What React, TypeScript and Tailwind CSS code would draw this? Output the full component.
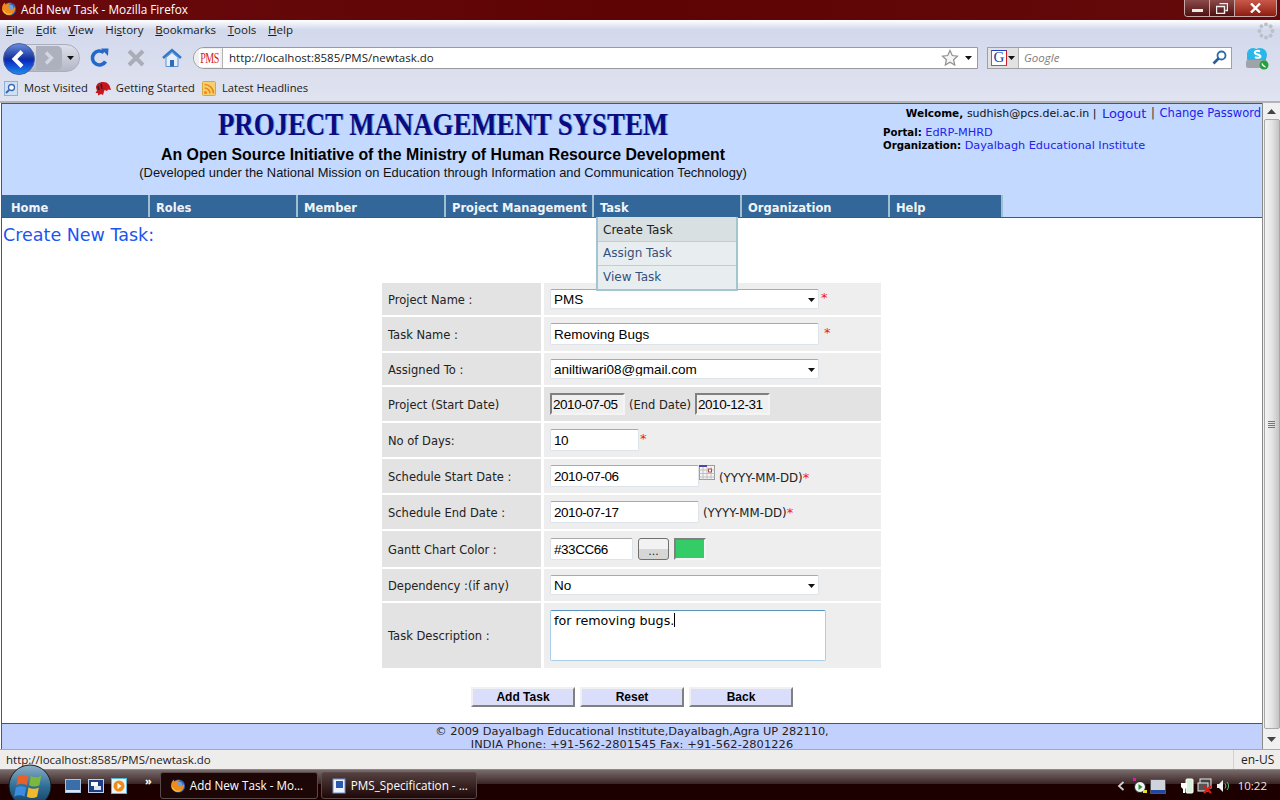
const CHROME = "font-['Open_Sans',sans-serif]";
const VERDANA = "font-['DejaVu_Sans',sans-serif]";
const ARIAL = "font-['Liberation_Sans',sans-serif]";

function Caret() {
  return (
    <svg width="7" height="4" viewBox="0 0 7 4" className="shrink-0">
      <path d="M0 0h7L3.5 4z" fill="#111" />
    </svg>
  );
}

function FirefoxIcon({ size = 16 }: { size?: number }) {
  return (
    <svg width={size} height={size} viewBox="0 0 16 16" className="shrink-0">
      <circle cx="8.5" cy="8" r="6.6" fill="#2f5fb0" />
      <circle cx="9" cy="7" r="3.6" fill="#6fa0dc" />
      <path d="M1 8c0-3 1.400-5.500 3-6.500-.2 1 .1 1.700.8 2.200C6 2.600 8 2 10 2.500 8.500 3 7.600 4 7.500 5c-.2 2 1.500 3.500 3.500 3.200 1.500-.2 2.600-1.400 2.700-3 1 2.800.2 6-2.200 7.600-2.600 1.800-6.200 1.500-8.500-.8C1.600 10.700 1 9.500 1 8z" fill="#ef8a1c" />
      <path d="M2 10c1 2.500 3.500 4 6 3.800 1.500-.1 3-.9 3.800-2-2 1.200-4.800 1.200-6.600.1C3.900 11.100 3.200 10 3 8.800z" fill="#f9c637" />
    </svg>
  );
}

function TitleBar() {
  return (
    <div className="flex h-[20px] items-start bg-gradient-to-r from-[#6a0a0e] via-[#5e0404] to-[#640a0c] pl-[1px]">
      <div className="mt-[1px]">
        <FirefoxIcon />
      </div>
      <span className={`${CHROME} ml-[4px] text-[11.8px] leading-[19px] text-white`}>Add New Task - Mozilla Firefox</span>
      <div className="ml-auto mr-[3px] flex h-[17px] w-[93px] overflow-hidden rounded-b-[4px] border border-t-0 border-[#c9a8a8]">
        <div className="flex w-[25px] items-center justify-center border-r border-[#c9a8a8] bg-gradient-to-b from-[#8a4a4a] to-[#4e1010]">
          <div className="mt-[4px] h-[3px] w-[11px] bg-[#e8e8e8]" />
        </div>
        <div className="flex w-[25px] items-center justify-center border-r border-[#c9a8a8] bg-gradient-to-b from-[#8a4a4a] to-[#4e1010]">
          <svg width="12" height="11" viewBox="0 0 12 11">
            <path d="M3.500.5h8v7h-2M.5 3.500h8v7h-8z" fill="none" stroke="#eee" strokeWidth="1.400" />
          </svg>
        </div>
        <div className="flex flex-1 items-center justify-center bg-gradient-to-b from-[#c8584a] to-[#8e1c10]">
          <svg width="11" height="10" viewBox="0 0 11 10">
            <path d="M1 .5l9 9M10 .5l-9 9" stroke="#fff" strokeWidth="2.400" />
          </svg>
        </div>
      </div>
    </div>
  );
}

const MENU_ITEMS: [string, string, string][] = [
  ["", "F", "ile"],
  ["", "E", "dit"],
  ["", "V", "iew"],
  ["Hi", "s", "tory"],
  ["", "B", "ookmarks"],
  ["", "T", "ools"],
  ["", "H", "elp"],
];

function MenuBar() {
  return (
    <div className={`${CHROME} flex h-[21px] items-center gap-[11.8px] pb-[2px] pl-[6px] text-[11.5px] text-[#1a1a1a]`}>
      {MENU_ITEMS.map(([a, b, c]) => (
        <span key={a + b + c}>
          {a}
          <span className="underline">{b}</span>
          {c}
        </span>
      ))}
      <svg width="18" height="18" viewBox="0 0 18 18" className="ml-auto mr-[5px] mt-[2px]">
        {[0, 45, 90, 135, 180, 225, 270, 315].map((r) => (
          <circle key={r} cx="9" cy="2.500" r="2" fill="#bcc0c8" transform={`rotate(${r} 9 9)`} />
        ))}
      </svg>
    </div>
  );
}

function BackForward() {
  return (
    <div className="relative ml-[3px] flex h-[28px] w-[77px] items-center justify-end rounded-full border border-[#a9aebd] bg-gradient-to-b from-[#dde0ea] to-[#b4b8c6] pr-[5px]">
      <div className="absolute -left-[1px] -top-[2px]">
        <svg width="32" height="32" viewBox="0 0 32 32">
          <defs>
            <linearGradient id="backBlue" x1="0" y1="0" x2="0" y2="1">
              <stop offset="0" stopColor="#6b8fe0" />
              <stop offset="0.5" stopColor="#12309c" />
              <stop offset="0.55" stopColor="#0a2cc0" />
              <stop offset="1" stopColor="#1f8df0" />
            </linearGradient>
          </defs>
          <circle cx="16" cy="16" r="15.500" fill="url(#backBlue)" stroke="#4a5f9c" />
          <path d="M19 8.500L11.500 16l7.500 7.500" fill="none" stroke="#fff" strokeWidth="4" />
        </svg>
      </div>
      <div className="mr-[5px] flex h-[24px] w-[26px] items-center justify-center rounded-r-[5px] bg-[#adb1bd]">
        <svg width="12" height="14" viewBox="0 0 12 14">
          <path d="M3 1.500L8.500 7 3 12.500" fill="none" stroke="#d4d7e0" strokeWidth="3.200" />
        </svg>
      </div>
      <Caret />
    </div>
  );
}

function NavBar() {
  return (
    <div className="flex h-[33px] items-center">
      <BackForward />
      <svg width="20" height="20" viewBox="0 0 20 20" className="ml-[10px]">
        <path d="M15.500 13.500A7 7 0 1 1 13.800 4.500" fill="none" stroke="#2468c8" strokeWidth="3.600" />
        <path d="M11 .5l7.500 0-.5 7.500z" fill="#2468c8" />
      </svg>
      <svg width="18" height="18" viewBox="0 0 18 18" className="ml-[17px]">
        <path d="M2 2l14 14M16 2L2 16" stroke="#a9adb8" strokeWidth="4" />
      </svg>
      <svg width="20" height="20" viewBox="0 0 20 20" className="ml-[17px]">
        <path d="M1 10l9-8 9 8" fill="none" stroke="#2f78c8" strokeWidth="2.400" />
        <path d="M4 9.500L10 4.500l6 5v9H4z" fill="#e8eef8" stroke="#5c90d0" />
        <rect x="8" y="12" width="4" height="6.500" fill="#2f6db8" />
      </svg>
      <div className="ml-[11px] flex h-[22px] w-[785px] items-center rounded-l-[11px] border border-[#9a9a9a] bg-white">
        <div className="flex h-full w-[29px] items-center justify-center rounded-l-[11px] border-r border-[#b5b5b5] bg-[#f0f0f0] pl-[3px]">
          <span className="bg-white px-[1px] font-['Liberation_Serif',serif] text-[10px] leading-[12px] tracking-[-0.5px] text-[#d5202a] [transform:scaleY(1.500)]">PMS</span>
        </div>
        <span className={`${CHROME} ml-[6px] text-[11.5px] text-[#1a1a1a]`}>http://localhost:8585/PMS/newtask.do</span>
        <svg width="18" height="18" viewBox="0 0 18 18" className="ml-auto mr-[-2px]">
          <path d="M9 1.500l2.300 5 5.200.6-3.900 3.600 1.100 5.300L9 13.300 4.300 16l1.100-5.300L1.500 7.100l5.200-.6z" fill="#f4f4f4" stroke="#8f8f8f" strokeWidth="1.200" />
        </svg>
        <div className="ml-[8px] mr-[5px]">
          <Caret />
        </div>
      </div>
      <div className="ml-[9px] flex h-[22px] w-[245px] items-center border border-[#a0a0a0] bg-white">
        <div className="flex h-full w-[31px] items-center gap-[1px] border-r border-[#b0b0b0] bg-[#e2e2e2] pl-[3px]">
          <div className="flex h-[16px] w-[16px] items-center justify-center border border-[#22a040] border-r-[#d02020] border-t-[#2040c0] bg-white font-['Liberation_Serif',serif] text-[15px] leading-none text-[#2040a8]">
            G
          </div>
          <Caret />
        </div>
        <span className={`${CHROME} ml-[5px] text-[11.5px] italic text-[#7d7d7d]`}>Google</span>
        <svg width="15" height="15" viewBox="0 0 15 15" className="ml-auto mr-[4px]">
          <circle cx="9.500" cy="5.500" r="4" fill="#fff" stroke="#2c6aa8" strokeWidth="1.800" />
          <path d="M6.500 8.500L1.500 13.500" stroke="#2c5a98" strokeWidth="2.600" />
        </svg>
      </div>
      <svg width="24" height="24" viewBox="0 0 24 24" className="ml-[13px]">
        <circle cx="8" cy="8" r="6" fill="#29b6e8" />
        <circle cx="15" cy="9" r="7" fill="#29b6e8" />
        <rect x="2" y="7" width="19" height="7" fill="#29b6e8" />
        <path d="M15 5.500c-3-1.500-6 0-5 1.800.8 1.400 5.500 1 5.500 3 0 1.800-3.500 2-5.500.8" fill="none" stroke="#fff" strokeWidth="2" />
        <rect x="1" y="14" width="21" height="8" rx="2" fill="#9ea4a8" />
        <circle cx="19" cy="19" r="4.500" fill="#22a13c" />
        <path d="M17 17.500c.5 2 1.500 3 3.500 3.500" fill="none" stroke="#fff" strokeWidth="1.400" />
      </svg>
    </div>
  );
}

function BookmarksBar() {
  return (
    <div className={`${CHROME} flex h-[27px] items-center pl-[4px] pt-[1px] text-[11.2px] text-[#1a1a1a]`}>
      <svg width="14" height="15" viewBox="0 0 14 15">
        <rect x=".5" y=".5" width="13" height="14" fill="#cfe0f5" stroke="#8fb0d8" />
        <circle cx="7.500" cy="6.500" r="3" fill="#fff" stroke="#3a68b0" strokeWidth="1.300" />
        <path d="M5 9l-3 3" stroke="#3a68b0" strokeWidth="1.800" />
      </svg>
      <span className="ml-[6px]">Most Visited</span>
      <svg width="16" height="15" viewBox="0 0 16 15" className="ml-[7px]">
        <path d="M1 7c0-4 3-6 7-6 3 0 5 1 6.500 3.500L16 9l-3-.5-1 1.500-2.500-1L8 14l-2-1-3 1.500L3 12 .5 12 2 9.500z" fill="#c8141c" />
        <path d="M3 5l1 4M6 3l1 5" stroke="#222" strokeWidth="1.400" />
      </svg>
      <span className="ml-[5px]">Getting Started</span>
      <svg width="14" height="15" viewBox="0 0 14 15" className="ml-[7px]">
        <rect x=".5" y=".5" width="13" height="14" rx="1" fill="#f6cf6e" stroke="#d8a840" />
        <circle cx="3.500" cy="11.500" r="1.500" fill="#e88a18" />
        <path d="M2.500 7a5.500 5.500 0 0 1 5.500 5.500M2.500 3.500a9 9 0 0 1 9 9" fill="none" stroke="#e88a18" strokeWidth="1.600" />
      </svg>
      <span className="ml-[6px]">Latest Headlines</span>
    </div>
  );
}

function Toolbox() {
  return (
    <div className="h-[83px] border-b-2 border-[#b4b4b8] bg-gradient-to-b from-white via-[#d3d9ec] via-[12%] to-[#e0e3f0]">
      <MenuBar />
      <NavBar />
      <BookmarksBar />
    </div>
  );
}

function PageHeader() {
  return (
    <div className="flex h-[91px] bg-[#c3d9ff]">
      <div className="flex w-[882px] flex-col items-center">
        <div className="mt-[2px] h-[38px] font-['Liberation_Serif',serif] text-[26.8px] font-bold leading-[38px] text-[#0b0b80] [text-shadow:1px_0_0_#6f9fe0] [transform:scaleY(1.150)]">
          PROJECT MANAGEMENT SYSTEM
        </div>
        <div className={`${ARIAL} mt-[1px] text-[15.86px] font-bold leading-[20px] text-black`}>
          An Open Source Initiative of the Ministry of Human Resource Development
        </div>
        <div className={`${ARIAL} text-[12.9px] leading-[16px] text-[#111]`}>
          (Developed under the National Mission on Education through Information and Communication Technology)
        </div>
      </div>
      <div className={`${VERDANA} flex flex-1 flex-col pr-[1px] text-[#2222ee]`}>
        <div className="flex h-[19px] items-center justify-end whitespace-nowrap text-[11.5px] leading-none">
          <span className="text-[10.5px] font-bold text-black">Welcome,&nbsp;</span>
          <span className="text-[11px] text-[#111]">sudhish@pcs.dei.ac.in&nbsp;|&nbsp;</span>
          <span className="ml-[2px] text-[13px]">Logout</span>
          <span className="mx-[1px] text-[#333]">&nbsp;|&nbsp;</span>
          <span>Change Password</span>
        </div>
        <div className="-ml-[1px] mt-[3px] text-[11.25px] leading-[13px]">
          <span className="text-[10.2px] font-bold text-black">Portal: </span>EdRP-MHRD
        </div>
        <div className="-ml-[1px] text-[11.25px] leading-[13px]">
          <span className="text-[10.2px] font-bold text-black">Organization: </span>Dayalbagh Educational Institute
        </div>
      </div>
    </div>
  );
}

const NAV_ITEMS = ["Home", "Roles", "Member", "Project Management", "Task", "Organization", "Help"];

function NavMenu() {
  return (
    <div className={`${VERDANA} flex h-[22px] bg-[#c3d9ff]`}>
      {NAV_ITEMS.map((item) => (
        <div
          key={item}
          className={`relative flex h-[22px] items-end border-r-2 border-[#9fc1cf] bg-[#336699] pb-[3px] text-[11.5px] font-bold leading-none text-[#f0f4f8] ${
            item === "Home" ? "pl-[9px]" : "pl-[6px]"
          } ${item === "Help" ? "w-[113px] border-r-0" : "w-[148px]"}`}
        >
          {item}
          {item === "Task" && <TaskMenu />}
        </div>
      ))}
    </div>
  );
}

function TaskMenu() {
  return (
    <div className="absolute left-[2px] top-[22px] z-10 w-[142px] border-2 border-t-0 border-[#a3c5cf] bg-[#e8eef0] text-[12px] font-normal text-[#35507c]">
      <div className="flex h-[24px] items-center bg-[#d8e0e2] pl-[5px] pt-[1px] text-[#222]">Create Task</div>
      <div className="flex h-[24px] items-center border-t border-[#b8d2da] pb-[1px] pl-[5px]">Assign Task</div>
      <div className="flex h-[24px] items-center border-t border-[#b8d2da] pb-[1px] pl-[5px]">View Task</div>
    </div>
  );
}

function Star() {
  return <span className={`${VERDANA} text-[13px] leading-none text-[#f01818]`}>*</span>;
}

function FormRow({
  label,
  height,
  shaded,
  children,
}: {
  label: string;
  height: string;
  shaded?: boolean;
  children: React.ReactNode;
}) {
  return (
    <div className={`flex ${height} gap-[3px]`}>
      <div className="flex w-[159px] items-center bg-[#e3e3e3] pl-[6px] pt-[3px] text-[11.5px] text-[#222]">{label}</div>
      <div className={`flex flex-1 items-center pl-[6px] ${shaded ? "bg-[#e3e3e3]" : "bg-[#eeeeee]"}`}>{children}</div>
    </div>
  );
}

function TextField({ value, width, compact }: { value: string; width: string; compact?: boolean }) {
  return (
    <input
      readOnly
      value={value}
      className={`${ARIAL} ${width} h-[22px] rounded-[2px] border border-[#dde3ea] border-t-[#a9a9a9] bg-white pl-[3px] text-[13.5px] text-black outline-none ${
        compact ? "tracking-[-0.45px]" : ""
      }`}
    />
  );
}

function ReadOnlyField({ value }: { value: string }) {
  return (
    <input
      readOnly
      value={value}
      className={`${ARIAL} h-[22px] w-[75px] border-2 border-[#f4f4f4] border-l-[#808080] border-t-[#808080] bg-[#f0f0f0] pl-[1px] text-[13.5px] tracking-[-0.45px] text-black outline-none`}
    />
  );
}

function SelectField({ value }: { value: string }) {
  return (
    <div className="relative h-[20px] w-[269px]">
      <select
        defaultValue={value}
        className={`${ARIAL} block h-full w-full appearance-none rounded-[2px] border border-[#dde3ea] border-t-[#a9a9a9] bg-white pl-[3px] pt-[1px] text-[13.5px] leading-none text-black outline-none`}
      >
        <option>{value}</option>
      </select>
      <div className="pointer-events-none absolute right-[4px] top-[9px]">
        <Caret />
      </div>
    </div>
  );
}

function DateHint() {
  return (
    <span className="text-[11.8px] text-[#222]">
      (YYYY-MM-DD)
      <Star />
    </span>
  );
}

function CalendarIcon() {
  return (
    <svg width="16" height="15" viewBox="0 0 16 15" className="-mt-[7px] mr-[4px]">
      <rect x=".5" y=".5" width="15" height="14" fill="#f4f4f4" stroke="#9a9a9a" />
      <rect x="0" y="0" width="8" height="2" fill="#4a4aa8" />
      <path d="M0 5h16M0 8.500h16M0 12h16M4 2v13M8 2v13M12 2v13" stroke="#b5b5b5" strokeWidth=".8" />
      <rect x="9.500" y="4" width="3" height="3" fill="#fff" stroke="#b04848" />
    </svg>
  );
}

function NewTaskForm() {
  return (
    <div className="ml-[380px] mt-[38px] flex w-[499px] flex-col gap-[2px]">
      <FormRow label="Project Name :" height="h-[32px]">
        <SelectField value="PMS" />
        <span className="-mt-[4px] ml-[2px]">
          <Star />
        </span>
      </FormRow>
      <FormRow label="Task Name :" height="h-[34px]">
        <TextField value="Removing Bugs" width="w-[269px]" />
        <span className="-mt-[4px] ml-[5px]">
          <Star />
        </span>
      </FormRow>
      <FormRow label="Assigned To :" height="h-[32px]">
        <SelectField value="aniltiwari08@gmail.com" />
      </FormRow>
      <FormRow label="Project (Start Date)" height="h-[34px]" shaded>
        <ReadOnlyField value="2010-07-05" />
        <span className="mx-[4px] mt-[4px] text-[11.5px] text-[#222]">(End Date)</span>
        <ReadOnlyField value="2010-12-31" />
      </FormRow>
      <FormRow label="No of Days:" height="h-[34px]">
        <TextField value="10" width="w-[89px]" compact />
        <span className="-mt-[4px] ml-[1px]">
          <Star />
        </span>
      </FormRow>
      <FormRow label="Schedule Start Date :" height="h-[34px]">
        <TextField value="2010-07-06" width="w-[149px]" compact />
        <CalendarIcon />
        <span className="mt-[2px]">
          <DateHint />
        </span>
      </FormRow>
      <FormRow label="Schedule End Date :" height="h-[34px]">
        <TextField value="2010-07-17" width="w-[149px]" compact />
        <span className="ml-[4px]">
          <DateHint />
        </span>
      </FormRow>
      <FormRow label="Gantt Chart Color :" height="h-[36px]">
        <TextField value="#33CC66" width="w-[83px]" compact />
        <button className="ml-[5px] h-[22px] w-[31px] rounded-[3px] border border-[#707070] bg-gradient-to-b from-[#f2f2f2] from-50% to-[#d6d6d6] to-50% pt-[5px] text-[11px] leading-none text-[#222]">
          ...
        </button>
        <div className="ml-[5px] h-[22px] w-[32px] border-2 border-[#f4f4f4] border-l-[#808080] border-t-[#808080] bg-[#33cc66]" />
      </FormRow>
      <FormRow label="Dependency :(if any)" height="h-[32px]">
        <SelectField value="No" />
      </FormRow>
      <FormRow label="Task Description :" height="h-[65px]">
        <div className="h-[51px] w-[276px] rounded-[2px] border border-[#a8cfe8] border-t-[#5c94c0] bg-white pl-[3px] text-[12.7px] leading-[16px] text-black">
          for removing bugs.
          <span className="inline-block h-[14px] w-[1px] translate-y-[2px] bg-black" />
        </div>
      </FormRow>
    </div>
  );
}

function ActionButton({ label }: { label: string }) {
  return (
    <button
      className={`${ARIAL} h-[20px] w-[104px] border-2 border-[#f0f0f0] border-b-[#808080] border-r-[#808080] bg-[#dadefa] text-[12px] font-bold leading-none text-black`}
    >
      {label}
    </button>
  );
}

function PageContent() {
  return (
    <div className={`${VERDANA} h-[506px] border-t border-[#555] bg-white`}>
      <div className="pl-[1px] pt-[7px] text-[17.5px] leading-[20px] text-[#1a56f0]">Create New Task:</div>
      <NewTaskForm />
      <div className="ml-[469px] mt-[19px] flex gap-[5px]">
        <ActionButton label="Add Task" />
        <ActionButton label="Reset" />
        <ActionButton label="Back" />
      </div>
    </div>
  );
}

function Scrollbar() {
  return (
    <div className="flex w-[18px] flex-col items-center border-l border-[#8a8a8a] bg-[#f0f0f0]">
      <div className="flex h-[16px] items-center justify-center">
        <svg width="9" height="5" viewBox="0 0 9 5">
          <path d="M0 5h9L4.500 0z" fill="#444" />
        </svg>
      </div>
      <div className="flex w-[16px] flex-1 items-center justify-center rounded-[2px] border border-[#a8a8a8] bg-gradient-to-r from-[#f4f4f4] via-[#e4e4e4] to-[#c4c4c4]">
        <div className="flex w-[7px] flex-col gap-[1px]">
          <div className="h-[1px] bg-[#777]" />
          <div className="h-[1px] bg-[#777]" />
          <div className="h-[1px] bg-[#777]" />
          <div className="h-[1px] bg-[#777]" />
        </div>
      </div>
      <div className="flex h-[20px] items-center justify-center">
        <svg width="9" height="5" viewBox="0 0 9 5">
          <path d="M0 0h9L4.500 5z" fill="#444" />
        </svg>
      </div>
    </div>
  );
}

function BrowserPage() {
  return (
    <div className="flex h-[646px] pl-[1px]">
      <div className="w-[1261px] overflow-hidden border-l border-t border-[#555]">
        <PageHeader />
        <NavMenu />
        <PageContent />
        <div className={`${VERDANA} h-[26px] border-t border-[#555] bg-[#c2d0fe] text-center text-[11.35px] leading-[13px] text-[#222]`}>
          <div className="pt-[1px]">© 2009 Dayalbagh Educational Institute,Dayalbagh,Agra UP 282110,</div>
          <div className="tracking-[0.12px]">INDIA Phone: +91-562-2801545 Fax: +91-562-2801226</div>
        </div>
      </div>
      <Scrollbar />
    </div>
  );
}

function StatusBar() {
  return (
    <div className={`${CHROME} flex h-[21px] items-center border-t border-b border-t-[#a8a8a8] border-b-[#888] bg-[#efedec] text-[12px] text-[#222]`}>
      <span className="pl-[6px] text-[11.5px]">http://localhost:8585/PMS/newtask.do</span>
      <span className="ml-auto flex h-full w-[47px] items-center border-l border-[#d0d0d0] pl-[7px]">en-US</span>
    </div>
  );
}

function StartOrb() {
  return (
    <div className="absolute bottom-0 left-[8px] z-10">
      <svg width="44" height="36" viewBox="0 0 44 36">
        <defs>
          <linearGradient id="orb" x1="0" y1="0" x2="0" y2="1">
            <stop offset="0" stopColor="#8fb0c8" />
            <stop offset="0.5" stopColor="#2f6f98" />
            <stop offset="1" stopColor="#0f3a60" />
          </linearGradient>
        </defs>
        <circle cx="22" cy="22" r="21" fill="url(#orb)" stroke="#1a1a1a" />
        <g transform="translate(-2.500 -3) scale(1.150)">
          <path d="M11 13c3-1.500 6-1.500 9 0l-1.500 8c-3-1.500-6-1.500-9 0z" fill="#e8602c" />
          <path d="M22 13c3 1.500 6 1.500 9 0l-1.500 8c-3 1.500-6 1.500-9 0z" fill="#7cb83c" />
          <path d="M9 23c3-1.500 6-1.500 9 0l-1.500 8c-3-1.500-6-1.500-9 0z" fill="#3c8ce0" />
          <path d="M20 23c3 1.500 6 1.500 9 0l-1.500 8c-3 1.500-6 1.500-9 0z" fill="#f0b82c" />
        </g>
      </svg>
    </div>
  );
}

function QuickLaunch() {
  return (
    <div className="ml-[65px] flex items-center gap-[7px] pt-[2px]">
      <svg width="16" height="14" viewBox="0 0 16 14">
        <rect x=".5" y=".5" width="15" height="13" fill="#3a6ea8" stroke="#a8c4e0" />
        <rect x="1" y="11" width="14" height="2" fill="#dde6f0" />
      </svg>
      <svg width="16" height="14" viewBox="0 0 16 14">
        <rect x=".5" y=".5" width="15" height="13" fill="#1c3f88" stroke="#c0d0e8" />
        <rect x="3" y="3" width="7" height="4" fill="#fff" />
        <rect x="6" y="7" width="7" height="4" fill="#dde6f0" />
      </svg>
      <svg width="16" height="16" viewBox="0 0 16 16">
        <rect x=".5" y=".5" width="15" height="15" fill="#e8f4f8" stroke="#58b8d8" />
        <circle cx="8" cy="8" r="5.500" fill="#f08a18" />
        <path d="M6.500 5l4 3-4 3z" fill="#fff" />
      </svg>
    </div>
  );
}

function TaskButton({
  label,
  active,
  width,
  icon,
}: {
  label: string;
  active?: boolean;
  width: string;
  icon: React.ReactNode;
}) {
  return (
    <div
      className={`${CHROME} flex h-[27px] ${width} items-center rounded-[3px] border border-[#5a4a4a] pl-[9px] text-[11.7px] text-white ${
        active ? "bg-[#1c0606]" : "bg-gradient-to-b from-[#544040] to-[#1e0808]"
      }`}
    >
      {icon}
      <span className="ml-[4px] whitespace-nowrap">{label}</span>
    </div>
  );
}

function Tray() {
  return (
    <div className="ml-auto flex items-center pr-[13px] pt-[2px]">
      <svg width="8" height="10" viewBox="0 0 8 10">
        <path d="M6.500 1L2 5l4.500 4" fill="none" stroke="#d0d0d0" strokeWidth="1.800" />
      </svg>
      <svg width="14" height="16" viewBox="0 0 14 16" className="ml-[8px]">
        <circle cx="7" cy="9" r="5.500" fill="#f4f4f4" stroke="#222" />
        <path d="M5.500 6l4 3-4 3z" fill="#1c9a2c" />
        <rect x="0" y="0" width="3" height="3" fill="#d020a0" />
        <rect x="10" y="12" width="4" height="3" fill="#e8e020" />
      </svg>
      <svg width="16" height="15" viewBox="0 0 16 15" className="ml-[3px]">
        <rect x=".5" y=".5" width="15" height="14" fill="#cfd4dc" stroke="#555" />
        <rect x="1" y="11" width="14" height="3" fill="#24469c" />
      </svg>
      <svg width="14" height="16" viewBox="0 0 14 16" className="ml-[14px]">
        <rect x="6" y="1" width="7" height="14" rx="1" fill="#d8f0d8" stroke="#fff" />
        <path d="M1 5h6v4l-2 2v4H3v-4L1 9z" fill="#fff" />
      </svg>
      <svg width="16" height="16" viewBox="0 0 16 16" className="ml-[3px]">
        <rect x="3" y="1" width="11" height="9" fill="#444" stroke="#eee" />
        <rect x="1" y="5" width="10" height="8" fill="#555" stroke="#eee" />
        <path d="M7 8l7 7M14 8l-7 7" stroke="#e01818" strokeWidth="2.400" />
      </svg>
      <svg width="14" height="14" viewBox="0 0 14 14" className="ml-[3px]">
        <path d="M1 5h2l4-4v12l-4-4H1z" fill="#eee" />
        <path d="M9 4.500a4 4 0 0 1 0 5M11 3a6 6 0 0 1 0 8" fill="none" stroke="#58c878" />
      </svg>
      <span className={`${CHROME} ml-[8px] text-[11.5px] text-[#e8e8e8]`}>10:22</span>
    </div>
  );
}

function Taskbar() {
  return (
    <div className="relative flex h-[30px] items-center bg-[linear-gradient(to_bottom,#7a6c6c_0%,#3c2626_45%,#1c0000_47%,#1c0000_100%)]">
      <StartOrb />
      <QuickLaunch />
      <span className="ml-[18px] -mt-[10px] text-[11px] font-bold leading-none text-white">»</span>
      <div className="ml-[8px] flex gap-[3px] pt-[1px]">
        <TaskButton label="Add New Task - Mo..." active width="w-[158px]" icon={<FirefoxIcon />} />
        <TaskButton
          label="PMS_Specification - ..."
          width="w-[156px]"
          icon={
            <svg width="16" height="16" viewBox="0 0 16 16">
              <rect x="2" y="1" width="12" height="14" fill="#eef2fa" stroke="#7090c8" />
              <rect x="5" y="3" width="7" height="7" fill="#2a5ab0" />
            </svg>
          }
        />
      </div>
      <Tray />
    </div>
  );
}

export default function App() {
  return (
    <div className="flex h-[800px] w-[1280px] flex-col overflow-hidden bg-white">
      <TitleBar />
      <Toolbox />
      <BrowserPage />
      <StatusBar />
      <Taskbar />
    </div>
  );
}
